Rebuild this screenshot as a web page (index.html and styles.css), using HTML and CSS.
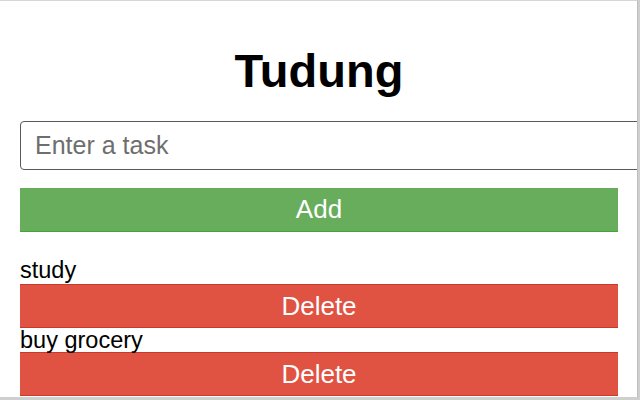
FILE: index.html
```html
<!DOCTYPE html>
<html>
<head>
<meta charset="utf-8">
<link rel="stylesheet" href="styles.css">
</head>
<body>
<div class="popup">
  <h1 class="title">Tudung</h1>
  <input class="task-input" type="text" placeholder="Enter a task">
  <button class="btn btn-add">Add</button>
  <ul class="tasks">
    <li class="task">
      <span class="task-name">study</span>
      <button class="btn btn-delete">Delete</button>
    </li>
    <li class="task">
      <span class="task-name">buy grocery</span>
      <button class="btn btn-delete">Delete</button>
    </li>
  </ul>
</div>
</body>
</html>
```

FILE: styles.css
```css
html, body {
  margin: 0;
  padding: 0;
  background: #cfcfcf;
  width: 640px;
  height: 400px;
  overflow: hidden;
  font-family: "Liberation Sans", Arial, sans-serif;
}

.popup {
  box-sizing: border-box;
  width: 638px;
  height: 397px;
  background: #fff;
  border-top: 1px solid #d6d6d6;
  border-right: 1px solid #bdbdbd;
  padding: 0 19px 0 20px;
  overflow: hidden;
  display: flex;
  flex-direction: column;
  align-items: stretch;
}

.title {
  margin: 43px 0 0;
  font-size: 47px;
  line-height: 54px;
  font-weight: bold;
  text-align: center;
  color: #000;
}

.task-input {
  margin-top: 23px;
  width: 640px;
  height: 49px;
  box-sizing: border-box;
  border: 1px solid #5a5a5a;
  border-radius: 4px;
  padding: 0 14px;
  font-family: "Liberation Sans", Arial, sans-serif;
  font-size: 25px;
  color: #000;
  outline: none;
}

.task-input::placeholder {
  color: #6e6e6e;
}

.btn {
  display: block;
  width: 100%;
  border: none;
  color: #fff;
  font-family: "Liberation Sans", Arial, sans-serif;
  font-size: 26px;
  padding: 0;
  cursor: pointer;
}

.btn-add {
  margin-top: 18px;
  height: 44px;
  background: #68ad5c;
  border-bottom: 1px solid #46a538;
}

.tasks {
  list-style: none;
  margin: 25px 0 0;
  padding: 0;
}

.task-name {
  display: block;
  font-size: 23.5px;
  line-height: 27px;
  color: #000;
}

.btn-delete {
  height: 44px;
  background: #e05343;
  border-top: 1px solid #c9382a;
  border-bottom: 1px solid #c9382a;
}

.task + .task .task-name {
  line-height: 24px;
}
```
